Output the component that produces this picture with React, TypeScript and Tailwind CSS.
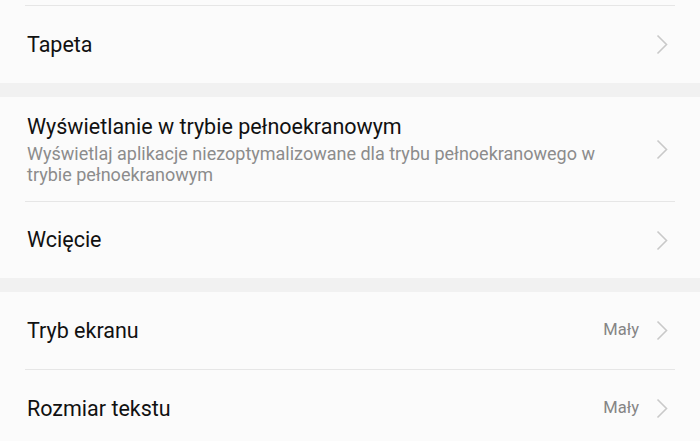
const font = { fontFamily: "Roboto, 'Noto Sans', sans-serif" };

function Chevron() {
  return (
    <svg width="12" height="21" viewBox="0 0 12 21" className="shrink-0">
      <path
        d="M1.5 1.5 L10.5 10.5 L1.5 19.5"
        fill="none"
        stroke="#c9c9c9"
        strokeWidth="1.6"
      />
    </svg>
  );
}

function Row({
  title,
  subtitle,
  value,
  divider,
  height,
}: {
  title: string;
  subtitle?: string;
  value?: string;
  divider?: boolean;
  height: string;
}) {
  return (
    <div className={`mx-[25px] flex items-center ${height} ${divider ? "border-t border-[#e6e6e6]" : ""}`}>
      <div className="flex-1 pl-[2px]">
        <div className="text-[21.5px] leading-[26px] text-[#111111]">{title}</div>
        {subtitle && (
          <div className="mt-[3px] max-w-[590px] text-[18px] leading-[21px] text-[#8c8c8c]">
            {subtitle}
          </div>
        )}
      </div>
      {value && <span className="mr-[17px] text-[16.5px] text-[#858585]">{value}</span>}
      <div className="pr-[7px]">
        <Chevron />
      </div>
    </div>
  );
}

export default function App() {
  return (
    <div className="w-[700px] h-[441px] overflow-hidden bg-[#fbfbfb]" style={font}>
      <div className="pt-[5px]">
        <Row title="Tapeta" divider height="h-[78px]" />
      </div>
      <div className="h-[14px] bg-[#f1f1f1]" />
      <div>
        <Row
          title="Wyświetlanie w trybie pełnoekranowym"
          subtitle="Wyświetlaj aplikacje niezoptymalizowane dla trybu pełnoekranowego w trybie pełnoekranowym"
          height="h-[104px]"
        />
        <Row title="Wcięcie" divider height="h-[77px]" />
      </div>
      <div className="h-[14px] bg-[#f1f1f1]" />
      <div>
        <Row title="Tryb ekranu" value="Mały" height="h-[77px]" />
        <Row title="Rozmiar tekstu" value="Mały" divider height="h-[78px]" />
      </div>
    </div>
  );
}
